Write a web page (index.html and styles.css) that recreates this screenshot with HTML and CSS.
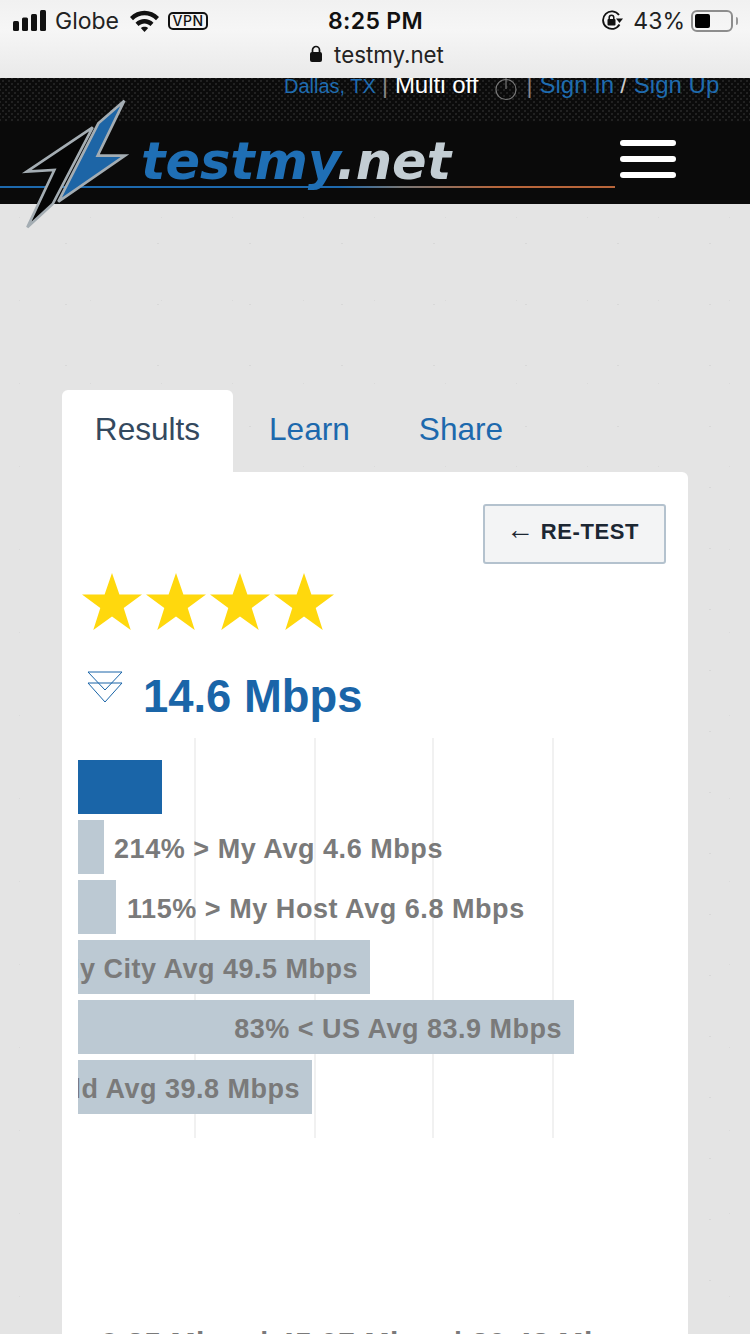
FILE: index.html
```html
<!DOCTYPE html>
<html lang="en">
<head>
    <meta charset="UTF-8" />
    <meta name="viewport" content="width=device-width, initial-scale=1.0"/>
    <title>testmy.net</title>
    <link rel="stylesheet" href="styles.css">
</head>
<body>
    <div class="browser-bar">
        <div class="status">
            <div class="status-left">
                <svg class="signal" width="33" height="21" viewBox="0 0 33 21"><rect x="0" y="11" width="6" height="10" rx="1.500"/><rect x="9" y="7.500" width="6" height="13.500" rx="1.500"/><rect x="18" y="4" width="6" height="17" rx="1.500"/><rect x="27" y="0" width="6" height="21" rx="1.500"/></svg>
                <span class="carrier">Globe</span>
                <svg class="wifi" width="29" height="22" viewBox="0 0 29 22"><path d="M0 7C8 -1.500 21 -1.500 29 7L26 10.200C19.500 3.500 9.500 3.500 3 10.200Z"/><path d="M5.500 12.800C10.500 7.800 18.500 7.800 23.500 12.800L20.500 16C17 12.500 12 12.500 8.500 16Z"/><path d="M10.800 18C12.800 16.300 16.200 16.300 18.200 18L14.500 22Z"/></svg>
                <span class="vpn">VPN</span>
            </div>
            <div class="clock">8:25 PM</div>
            <div class="status-right">
                <svg class="lock-rotate" width="21" height="21" viewBox="0 0 21 21"><path d="M17.500 14.500A8.800 8.800 0 1 1 17 5" fill="none" stroke="#111" stroke-width="1.800"/><path d="M14 8.500L21 8.500L17.500 13Z"/><rect x="5.500" y="9" width="8" height="6.500" rx="1"/><path d="M7.200 9.500V7.500A2.300 2.300 0 0 1 11.800 7.500V9.500" fill="none" stroke="#111" stroke-width="1.500"/></svg>
                <span class="battery-pct">43%</span>
                <div class="battery"><div class="battery-fill"></div></div>
                <div class="battery-cap"></div>
            </div>
        </div>
        <div class="address">
            <svg width="14" height="18" viewBox="0 0 14 18"><rect x="1" y="7" width="12" height="10" rx="2"/><path d="M3.500 8V5A3.500 3.500 0 0 1 10.500 5V8" fill="none" stroke="#111" stroke-width="1.700"/></svg>
            <span>testmy.net</span>
        </div>
    </div>

    <header class="site-header">
        <div class="top-strip">
            <a class="link city">Dallas, TX</a>
            <span class="sep sep-first">|</span>
            <span class="multi">Multi off</span>
            <svg class="power" width="22" height="24" viewBox="0 0 22 24"><circle cx="11" cy="11.500" r="10" fill="none" stroke="#777" stroke-width="1.200"/><path d="M11 0V11" stroke="#777" stroke-width="1.200"/></svg>
            <span class="sep sep-second">|</span>
            <a class="link">Sign In</a>
            <span class="slash">/</span>
            <a class="link">Sign Up</a>
        </div>
        <div class="logo-row">
            <div class="logo-line"></div>
            <svg class="bolt" width="130" height="145" viewBox="0 0 390 435">
                <path d="M343 32L263 197L345 197L145 335L265 100Z" fill="#1d65a6" stroke="#a4adb3" stroke-width="8"/>
                <path d="M248 112L50 245L133 240L52 412L128 342Z" fill="#050505" stroke="#a4adb3" stroke-width="8"/>
            </svg>
            <div class="wordmark"><span class="word-blue">testmy</span><span class="word-grey">.net</span></div>
            <div class="hamburger"><i></i><i></i><i></i></div>
        </div>
    </header>

    <main class="page">
        <nav class="tabs">
            <div class="tab tab-active">Results</div>
            <div class="tab">Learn</div>
            <div class="tab">Share</div>
        </nav>
        <section class="card">
            <div class="card-actions">
                <button class="retest"><span class="arrow">←</span> RE-TEST</button>
            </div>
            <div class="stars">
                <svg width="64" height="60" viewBox="0 0 64 60"><path d="M32 1L39.400 22.500L62 22.500L43.700 36L50.700 58L32 44.500L13.300 58L20.300 36L2 22.500L24.600 22.500Z"/></svg>
                <svg width="64" height="60" viewBox="0 0 64 60"><path d="M32 1L39.400 22.500L62 22.500L43.700 36L50.700 58L32 44.500L13.300 58L20.300 36L2 22.500L24.600 22.500Z"/></svg>
                <svg width="64" height="60" viewBox="0 0 64 60"><path d="M32 1L39.400 22.500L62 22.500L43.700 36L50.700 58L32 44.500L13.300 58L20.300 36L2 22.500L24.600 22.500Z"/></svg>
                <svg width="64" height="60" viewBox="0 0 64 60"><path d="M32 1L39.400 22.500L62 22.500L43.700 36L50.700 58L32 44.500L13.300 58L20.300 36L2 22.500L24.600 22.500Z"/></svg>
            </div>
            <div class="speed">
                <svg width="36" height="32" viewBox="0 0 36 32"><path d="M1 1H35L18 19Z M1 12H35L18 31Z" fill="none" stroke="#1a65a8" stroke-width="1"/></svg>
                <span>14.6 Mbps</span>
            </div>
            <div class="chart">
                <div class="grid-lines"><i></i><i></i><i></i><i></i></div>
                <div class="bar-row"><div class="bar bar-main" style="width:84px"></div></div>
                <div class="bar-row"><div class="bar" style="width:26px"></div><span class="bar-label">214% &gt; My Avg 4.6 Mbps</span></div>
                <div class="bar-row"><div class="bar" style="width:38px"></div><span class="bar-label label-host">115% &gt; My Host Avg 6.8 Mbps</span></div>
                <div class="bar-row"><div class="bar bar-in" style="width:292px"><span>70% &lt; My City Avg 49.5 Mbps</span></div></div>
                <div class="bar-row"><div class="bar bar-in" style="width:496px"><span>83% &lt; US Avg 83.9 Mbps</span></div></div>
                <div class="bar-row"><div class="bar bar-in" style="width:234px"><span>63% &lt; World Avg 39.8 Mbps</span></div></div>
            </div>
            <div class="summary">9.35 Mbps | 45.07 Mbps | 30.48 Mbps</div>
        </section>
    </main>
</body>
</html>
```

FILE: styles.css
```css
html, body {
    margin: 0;
    padding: 0;
}

body {
    width: 750px;
    height: 1334px;
    overflow: hidden;
    font-family: "Liberation Sans", Arial, sans-serif;
    background-color: #e4e4e4;
    background-image: radial-gradient(circle, #d8d8d8 0.6px, transparent 1px), radial-gradient(circle, #dadada 0.6px, transparent 1px);
    background-size: 92px 61px, 71px 83px;
    background-position: 20px 30px, 55px 10px;
}

.browser-bar {
    height: 78px;
    box-sizing: border-box;
    background: linear-gradient(#f1f1f1, #f6f6f6 30px, #e9e9e9 78px);
    color: #111;
}

.status {
    height: 38px;
    padding: 3px 12px 0 13px;
    box-sizing: border-box;
    display: grid;
    grid-template-columns: 1fr auto 1fr;
    align-items: center;
    font-family: Inter, "Liberation Sans", sans-serif;
}

.status-left {
    display: flex;
    align-items: center;
}

.signal {
    margin-right: 9px;
    fill: #111;
}

.carrier {
    font-size: 23px;
    color: #222;
    margin-right: 11px;
}

.wifi {
    fill: #111;
    margin-right: 9px;
}

.vpn {
    border: 2px solid #111;
    border-radius: 5px;
    font-size: 14px;
    font-weight: 500;
    line-height: 14px;
    padding: 0 2px;
    width: 32px;
    text-align: center;
    letter-spacing: 0.5px;
}

.clock {
    font-size: 23px;
    font-weight: 600;
    letter-spacing: 0.3px;
}

.status-right {
    display: flex;
    align-items: center;
    justify-content: flex-end;
}

.lock-rotate {
    fill: #111;
    margin-right: 10px;
}

.battery-pct {
    font-size: 23px;
    color: #222;
    margin-right: 6px;
}

.battery {
    width: 42px;
    height: 22px;
    box-sizing: border-box;
    border: 2px solid #8d8d8d;
    border-radius: 6px;
    padding: 2px;
}

.battery-fill {
    width: 15px;
    height: 100%;
    background-color: #000;
    border-radius: 2px;
}

.battery-cap {
    width: 2px;
    height: 8px;
    margin-left: 3px;
    background-color: #999;
    border-radius: 0 2px 2px 0;
}

.address {
    display: flex;
    align-items: center;
    justify-content: center;
    gap: 11px;
    height: 32px;
    padding-left: 3px;
    font-family: Inter, "Liberation Sans", sans-serif;
    font-size: 22.300px;
    color: #222;
    fill: #111;
}

.site-header {
    height: 126px;
    background-color: #0a0a0a;
}

.top-strip {
    height: 44px;
    box-sizing: border-box;
    display: flex;
    align-items: baseline;
    padding-left: 284px;
    font-size: 24px;
    line-height: 14px;
    overflow: hidden;
    background-color: #0b0b0b;
    background-image: radial-gradient(circle, #2e2e2e 0.6px, transparent 0.9px), radial-gradient(circle, #2e2e2e 0.6px, transparent 0.9px);
    background-size: 6px 6px;
    background-position: 0 0, 3px 3px;
    color: #fff;
    white-space: nowrap;
}

.link {
    color: #1f6cb0;
}

.city {
    font-size: 20px;
}

.sep {
    color: #888;
    font-size: 23px;
    margin-left: 6px;
    margin-right: 7px;
}

.sep-second {
    margin-left: 9px;
    margin-right: 7px;
}

.power {
    margin-left: 17px;
    flex: none;
    align-self: flex-start;
}

.slash {
    margin: 0 7px 0 6px;
    color: #ccc;
}

.logo-row {
    height: 82px;
    position: relative;
    display: flex;
    align-items: flex-start;
    padding-left: 141px;
}

.logo-line {
    position: absolute;
    left: 0;
    top: 64px;
    width: 615px;
    height: 2px;
    background: linear-gradient(to right, #1d69ad 0, #1d69ad 340px, #777 400px, #b8653a 500px);
}

.bolt {
    position: absolute;
    left: 10px;
    top: -32px;
}

.wordmark {
    position: relative;
    margin-top: 10px;
    font-family: "DejaVu Sans", sans-serif;
    font-size: 51px;
    line-height: 60px;
    font-weight: bold;
    font-style: italic;
}

.word-blue {
    color: #1f6fb5;
}

.word-grey {
    color: #c3cdd3;
}

.hamburger {
    position: absolute;
    left: 620px;
    top: 18px;
    width: 56px;
    display: flex;
    flex-direction: column;
    gap: 10px;
}

.hamburger i {
    display: block;
    height: 6px;
    border-radius: 3px;
    background-color: #fff;
}

.page {
    padding: 186px 62px 0 62px;
}

.tabs {
    display: flex;
    height: 82px;
}

.tab {
    font-size: 31.600px;
    line-height: 79px;
    color: #1d69ad;
    margin-left: 36px;
    padding-right: 33px;
}

.tab-active {
    width: 171px;
    box-sizing: border-box;
    margin-left: 0;
    padding: 0;
    text-align: center;
    color: #34495e;
    background-color: #fff;
    border-radius: 6px 6px 0 0;
}

.card {
    background-color: #fff;
    border-radius: 0 6px 0 0;
    height: 900px;
    padding: 32px 22px 0 16px;
    box-sizing: border-box;
}

.card-actions {
    display: flex;
    justify-content: flex-end;
}

.retest {
    width: 183px;
    height: 60px;
    padding: 0 4px 4px 0;
    border: 2px solid #b4c2ce;
    border-radius: 3px;
    background-color: #f3f4f5;
    color: #1c2733;
    font-family: "Liberation Sans", sans-serif;
    font-size: 22px;
    font-weight: bold;
    letter-spacing: 0.600px;
}

.arrow {
    font-weight: normal;
    font-size: 28px;
    line-height: 20px;
    letter-spacing: 0;
}

.stars {
    display: flex;
    margin-top: 8px;
    margin-left: 2px;
    fill: #ffd80d;
    height: 62px;
}

.speed {
    display: flex;
    align-items: flex-start;
    margin-top: 37px;
    margin-left: 9px;
    color: #1a65a8;
    font-size: 45.400px;
    font-weight: bold;
    line-height: 52px;
    gap: 20px;
}

.chart {
    position: relative;
    margin-top: 15px;
    padding: 22px 0 24px 0;
    height: 400px;
    box-sizing: border-box;
}

.grid-lines i {
    position: absolute;
    top: 0;
    bottom: 0;
    width: 2px;
    background-color: #f1f1f1;
}

.grid-lines i:nth-child(1) { left: 116px; }
.grid-lines i:nth-child(2) { left: 236px; }
.grid-lines i:nth-child(3) { left: 354px; }
.grid-lines i:nth-child(4) { left: 474px; }

.bar-row {
    position: relative;
    display: flex;
    align-items: center;
    height: 54px;
    margin-bottom: 6px;
    font-size: 27px;
    letter-spacing: 0.550px;
    font-weight: bold;
    color: #7a7a7a;
    white-space: nowrap;
}

.bar {
    height: 54px;
    background-color: #bcc9d3;
    flex: none;
}

.bar-main {
    background-color: #1a65a8;
}

.bar-in {
    display: flex;
    justify-content: flex-end;
    align-items: center;
    overflow: hidden;
    padding-right: 12px;
    box-sizing: border-box;
    letter-spacing: 0.500px;
}

.bar-in span {
    flex: none;
    padding-top: 4px;
}

.bar-label {
    margin-left: 10px;
    padding-top: 4px;
}

.label-host {
    margin-left: 11px;
}

.summary {
    margin-top: 188px;
    margin-left: 23px;
    font-size: 30px;
    font-weight: bold;
    letter-spacing: 0.550px;
    color: #7a7a7a;
    white-space: nowrap;
}
```
